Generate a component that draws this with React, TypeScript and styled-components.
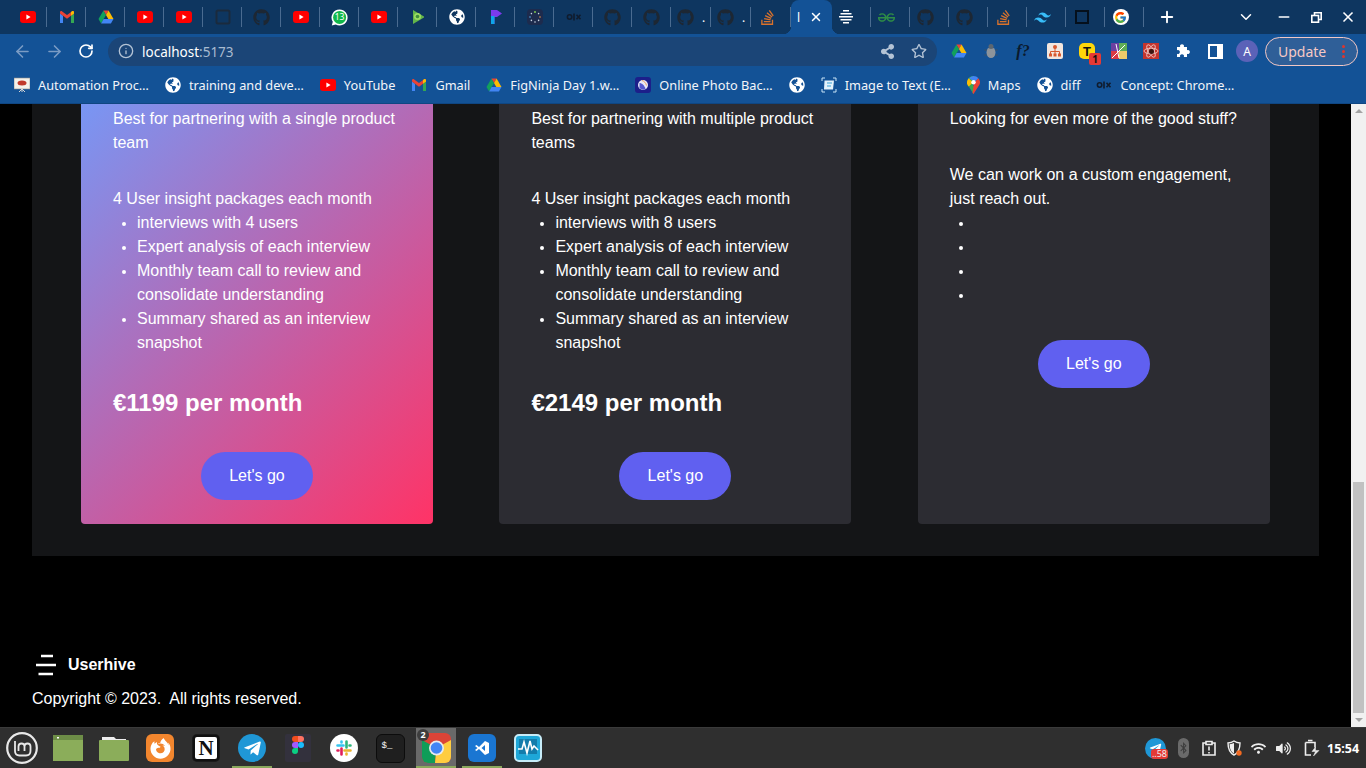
import React from 'react'
import styled, { createGlobalStyle } from 'styled-components'
import {
  FaBluetoothB,
  FaFirefoxBrowser,
  FaGithub,
  FaGlobeAmericas,
  FaRegStar,
  FaShareAlt,
  FaStackOverflow,
  FaTelegramPlane,
  FaVolumeUp,
  FaWifi,
} from 'react-icons/fa'
import { FcGoogle } from 'react-icons/fc'
import { SiGeeksforgeeks, SiTailwindcss } from 'react-icons/si'
import { ArrowLeft, ArrowRight, ChevronDown, Info, Minus, Plus, RotateCw, X } from 'lucide-react'

const GlobalStyle = createGlobalStyle`
  html, body {
    margin: 0;
    padding: 0;
    overflow: hidden;
    background: #000000;
  }
`

const Screen = styled.div`
  display: flex;
  flex-direction: column;
  width: 1366px;
  height: 768px;
  overflow: hidden;
  font-family: 'Noto Sans', sans-serif;
  color: #ffffff;
`

/* browser chrome */
const TabStrip = styled.div`
  display: flex;
  align-items: center;
  flex: none;
  height: 34px;
  padding-left: 8px;
  background: #0e3660;
`
const Tab = styled.div<{ $width?: number; $nudge?: number }>`
  display: flex;
  align-items: center;
  justify-content: center;
  gap: 8px;
  box-sizing: border-box;
  width: ${({ $width }) => $width ?? 39}px;
  height: 20px;
  padding-right: ${({ $nudge }) => $nudge ?? 0}px;
  padding-left: ${({ $nudge }) => ($nudge ? 0 : 1)}px;
  border-right: 1px solid #4a6b90;
  font-size: 12px;
`
const ActiveTab = styled.div`
  position: relative;
  display: flex;
  align-items: center;
  justify-content: flex-end;
  gap: 9px;
  box-sizing: border-box;
  width: 41px;
  height: 34px;
  padding-right: 9px;
  border-radius: 8px 8px 0 0;
  background: #135296;
  font-size: 12px;

  &::before,
  &::after {
    content: '';
    position: absolute;
    bottom: 0;
    width: 8px;
    height: 8px;
  }
  &::before {
    left: -8px;
    background: radial-gradient(circle at 0 0, transparent 8px, #135296 8.5px);
  }
  &::after {
    right: -8px;
    background: radial-gradient(circle at 100% 0, transparent 8px, #135296 8.5px);
  }
`
const NewTab = styled.div`
  display: flex;
  align-items: center;
  justify-content: center;
  width: 46px;
`
const WindowControls = styled.div`
  display: flex;
  align-items: center;
  margin-left: auto;
  padding-right: 2px;
`
const WindowButton = styled.div<{ $gap?: number }>`
  display: flex;
  align-items: center;
  justify-content: center;
  width: 32px;
  margin-right: ${({ $gap }) => $gap ?? 0}px;
`

const Toolbar = styled.div`
  display: flex;
  align-items: center;
  flex: none;
  height: 34px;
  padding-left: 6px;
  background: #135296;
`
const NavButton = styled.div<{ $dim?: boolean }>`
  display: flex;
  align-items: center;
  justify-content: center;
  width: 32px;
  color: ${({ $dim }) => ($dim ? '#7b9cc4' : '#ffffff')};
`
const Omnibox = styled.div`
  display: flex;
  align-items: center;
  gap: 8px;
  box-sizing: border-box;
  width: 829px;
  height: 29px;
  margin: 0 6px;
  padding: 0 10px;
  border-radius: 15px;
  background: #1b4577;
  color: #b4c3d5;
`
const Address = styled.div`
  flex: 1;
  padding-top: 1px;
  font-size: 13.5px;
  color: #a9bbd0;
`
const Host = styled.span`
  color: #ffffff;
`
const OmniboxAction = styled.div`
  display: flex;
  margin-left: 8px;
`
const ExtensionButton = styled.div`
  position: relative;
  display: flex;
  align-items: center;
  justify-content: center;
  width: 32px;
  height: 24px;
`
const ExtensionBadge = styled.span`
  position: absolute;
  right: 2px;
  bottom: -2px;
  width: 12px;
  height: 12px;
  border-radius: 2px;
  background: #e53935;
  color: #111111;
  font-size: 10px;
  font-weight: 700;
  line-height: 12px;
  text-align: center;
`
const Tile = styled.div<{ $bg: string; $color?: string; $size?: number; $radius?: number }>`
  display: flex;
  align-items: center;
  justify-content: center;
  flex: none;
  box-sizing: border-box;
  width: ${({ $size }) => $size ?? 16}px;
  height: ${({ $size }) => $size ?? 16}px;
  border-radius: ${({ $radius }) => $radius ?? 3}px;
  background: ${({ $bg }) => $bg};
  color: ${({ $color }) => $color ?? '#ffffff'};
`
const TileText = styled.span<{ $serif?: boolean; $size: number }>`
  font-family: ${({ $serif }) =>
    $serif ? "'Liberation Serif', serif" : "'Liberation Sans', sans-serif"};
  font-size: ${({ $size }) => $size}px;
  font-weight: 700;
  line-height: 1;
`
const NotionTile = styled(Tile)`
  border: 2px solid #111111;
  box-shadow: 0 0 0 1px #1a1a1a;
`
const TerminalTile = styled(Tile)`
  align-items: flex-start;
  justify-content: flex-start;
  padding: 6px 0 0 5px;
  border: 1px solid #0c0c0c;

  span {
    font-family: 'Liberation Mono', monospace;
    font-size: 9px;
    font-weight: 400;
  }
`
const FormulaMark = styled.span`
  color: #0b1a2d;
  font-family: 'Liberation Serif', serif;
  font-size: 16px;
  font-style: italic;
  font-weight: 700;
`
const SidePanelIcon = styled.div`
  box-sizing: border-box;
  width: 15px;
  height: 15px;
  border: 2px solid #ffffff;
  border-right-width: 6px;
`
const Avatar = styled.div`
  display: flex;
  align-items: center;
  justify-content: center;
  width: 22px;
  height: 22px;
  border-radius: 50%;
  background: #5b62b8;
  font-size: 12px;
`
const UpdatePill = styled.div`
  display: flex;
  align-items: center;
  justify-content: space-between;
  box-sizing: border-box;
  width: 93px;
  height: 29px;
  margin-left: 2px;
  padding: 0 12px;
  border: 1px solid #f2c7c4;
  border-radius: 15px;
  background: #2f5f98;
  color: #f6c9c5;
  font-size: 14px;
`
const MenuDots = styled.div`
  display: flex;
  flex-direction: column;
  gap: 2px;

  i {
    display: block;
    width: 3px;
    height: 3px;
    border-radius: 50%;
    background: #e0352b;
  }
`

const Bookmarks = styled.div`
  display: flex;
  align-items: center;
  gap: 16px;
  flex: none;
  box-sizing: border-box;
  height: 36px;
  padding: 0 0 1px 14px;
  border-bottom: 1px solid #0f4682;
  background: #135296;
`
const Bookmark = styled.div`
  display: flex;
  align-items: center;
  gap: 8px;
  font-size: 12.75px;
  white-space: nowrap;
  color: #f2f5f9;
`

/* page content */
const Viewport = styled.div`
  display: flex;
  flex: 1;
  min-height: 0;
  font-family: 'Liberation Sans', Arial, sans-serif;
`
const Page = styled.main`
  flex: 1;
  box-sizing: border-box;
  padding: 0 32px;
  background: #000000;
`
const PricingPanel = styled.section`
  display: flex;
  gap: 66.4px;
  padding: 0 49px 32px;
  background: #141517;
`
const Card = styled.article<{ $featured?: boolean }>`
  display: flex;
  flex-direction: column;
  box-sizing: border-box;
  width: 352px;
  padding: 3px 32px 24px;
  border-radius: 0 0 4px 4px;
  background: ${({ $featured }) =>
    $featured ? 'linear-gradient(135deg, #7896f4 0%, #ff3366 100%)' : '#2c2c32'};
`
const Copy = styled.p`
  margin: 0 0 32px;
  font-size: 16px;
  line-height: 24px;
`
const Lead = styled.div`
  font-size: 16px;
  line-height: 24px;
`
const Features = styled.ul`
  margin: 0;
  padding-left: 24px;
  font-size: 16px;
  line-height: 24px;

  li::marker {
    font-size: 13px;
  }
`
const Price = styled.div`
  margin: 32px 0 1px;
  font-size: 24px;
  font-weight: 700;
  line-height: 31px;
`
const GoButton = styled.button`
  align-self: center;
  width: 112px;
  height: 48px;
  margin-top: 33px;
  padding: 0 0 1px;
  border: 0;
  border-radius: 24px;
  background: #6060f0;
  color: #ffffff;
  font-family: inherit;
  font-size: 16px;
`
const Footer = styled.footer`
  padding-top: 97px;
`
const Brand = styled.div`
  display: flex;
  align-items: center;
  gap: 12px;
  font-size: 16px;
  font-weight: 700;
  line-height: 24px;
`
const Copyright = styled.div`
  margin-top: 10px;
  font-size: 16px;
  line-height: 24px;
  white-space: pre;
`
const Scrollbar = styled.div`
  display: flex;
  flex-direction: column;
  align-items: center;
  flex: none;
  box-sizing: border-box;
  width: 15px;
  padding: 5px 0;
  background: #f1f1f1;
`
const ScrollThumb = styled.div`
  width: 11px;
  height: 231px;
  margin: auto 0 5px;
  background: #c1c1c1;
`
const ScrollArrow = styled.div<{ $up?: boolean }>`
  width: 0;
  height: 0;
  border-right: 4px solid transparent;
  border-left: 4px solid transparent;
  ${({ $up }) =>
    $up ? 'border-bottom: 4px solid #a3a3a3;' : 'border-top: 4px solid #a3a3a3;'}
`

/* desktop panel */
const Taskbar = styled.div`
  display: flex;
  align-items: stretch;
  flex: none;
  box-sizing: border-box;
  height: 41px;
  padding-left: 2px;
  border-top: 1px solid #3a3a3a;
  background: #2f2f2f;
`
const DockItems = styled.div`
  display: flex;
  gap: 6px;
`
const DockItem = styled.div<{ $open?: boolean; $active?: boolean }>`
  position: relative;
  display: flex;
  align-items: center;
  justify-content: center;
  box-sizing: border-box;
  width: 40px;
  padding-top: ${({ $open }) => ($open ? 2 : 0)}px;
  border-bottom: ${({ $open }) => ($open ? '2px solid #8aa85c' : '0')};
  background: ${({ $active }) => ($active ? '#696969' : 'transparent')};
`
const DockBadge = styled.span`
  position: absolute;
  top: 1px;
  left: 1px;
  width: 12px;
  height: 12px;
  border-radius: 50%;
  background: #3d3d3d;
  font-size: 9px;
  font-weight: 700;
  line-height: 12px;
  text-align: center;
`
const Tray = styled.div`
  display: flex;
  align-items: center;
  margin-left: auto;
  padding-right: 4px;
`
const TrayItem = styled.div<{ $gap?: number }>`
  position: relative;
  display: flex;
  align-items: center;
  justify-content: center;
  width: 25px;
  margin-right: ${({ $gap }) => $gap ?? 0}px;
  color: #eeeeee;
`
const TrayBadge = styled.span`
  position: absolute;
  right: 0;
  bottom: 0;
  height: 10px;
  padding: 0 1px;
  border-radius: 3px;
  background: #e53935;
  font-size: 9px;
  line-height: 10px;
`
const BluetoothPill = styled.div`
  display: flex;
  align-items: center;
  justify-content: center;
  width: 11px;
  height: 20px;
  border-radius: 6px;
  background: #6a6a6a;
  color: #3c3c3c;
`
const Clock = styled.div`
  width: 35px;
  font-size: 12.5px;
  font-weight: 700;
`

const Youtube = () => (
  <svg width="16" height="16" viewBox="0 0 16 16">
    <rect y="2" width="16" height="12" rx="3" fill="#fe0000" />
    <path d="M6.4 5.6 10.6 8l-4.2 2.4z" fill="#ffffff" />
  </svg>
)
const Gmail = () => (
  <svg width="16" height="16" viewBox="0 0 16 16">
    <path d="M1 14V4.5l3 2.2V14z" fill="#4285f4" />
    <path d="M12 14V6.7l3-2.2V14z" fill="#34a853" />
    <path d="M4 6.7 1 4.5V3.4C1 2.3 2.3 1.7 3.2 2.4L8 6l4.8-3.6c.9-.7 2.2-.1 2.2 1v1.1l-3 2.2L8 9.7z" fill="#ea4335" />
    <path d="M12 6.7 15 4.5V3.4c0-1.1-1.3-1.7-2.2-1L12 3z" fill="#fbbc04" />
  </svg>
)
const Drive = () => (
  <svg width="16" height="16" viewBox="0 0 16 16">
    <path d="M5.4 1.5h5.2l-2.6 4.6z" fill="#ea4335" />
    <path d="M5.4 1.5 .5 10l2.6 4.5L8 6.1z" fill="#12a05c" />
    <path d="M10.6 1.5 15.5 10h-5.2L8 6.1z" fill="#fbbc04" />
    <path d="M5.6 10h9.9l-2.6 4.5H3.1z" fill="#4285f4" />
  </svg>
)
const Whatsapp = () => (
  <svg width="17" height="17" viewBox="0 0 17 17">
    <path d="M8.5.5a8 8 0 1 1-3.8 15L.8 16.4l1-3.6A8 8 0 0 1 8.5.5z" fill="#ffffff" />
    <circle cx="8.6" cy="8.4" r="6.5" fill="#11b84a" />
    <text x="8.6" y="11.4" fontSize="8.5" fill="#ffffff" textAnchor="middle" fontFamily="Noto Sans">13</text>
  </svg>
)
const PlayLeaf = () => (
  <svg width="16" height="16" viewBox="0 0 16 16">
    <path d="M3 1l11 6.500v1L3 15z" fill="#63b54a" />
    <circle cx="7.500" cy="7.500" r="3.500" fill="#9bdc62" />
    <circle cx="7.500" cy="7.500" r="1.800" fill="#3f8f3a" />
  </svg>
)
const Pinwheel = () => (
  <svg width="16" height="16" viewBox="0 0 16 16">
    <path d="M3 1h6l5 3.500L9 8H6.500v7H3z" fill="#7c3aed" />
    <path d="M3 7h3.500v8H3z" fill="#0ea5e9" />
  </svg>
)
const DotRing = () => (
  <svg width="16" height="16" viewBox="0 0 16 16">
    <rect width="16" height="16" rx="4" fill="#1d2b4d" />
    <g fill="#c7d2e2">
      <circle cx="8" cy="3" r="1" fill="#7ac74f" />
      <circle cx="11.6" cy="4.6" r=".8" />
      <circle cx="13" cy="8" r=".8" fill="#e3924b" />
      <circle cx="11.6" cy="11.4" r=".8" />
      <circle cx="8" cy="13" r=".8" />
      <circle cx="4.4" cy="11.4" r=".8" />
      <circle cx="3" cy="8" r=".8" fill="#5aa8e6" />
      <circle cx="4.4" cy="4.6" r=".8" />
    </g>
  </svg>
)
const AlxMark = () => (
  <svg width="16" height="16" viewBox="0 0 16 16" fill="none" stroke="#101c2e" strokeWidth="1.6">
    <circle cx="3.6" cy="8" r="2.2" />
    <path d="M8 4.5v7M10.5 5.8l4 4.4M14.5 5.8l-4 4.4" />
  </svg>
)
const StripedOrb = () => (
  <svg width="14" height="16" viewBox="0 0 14 16" fill="#ffffff">
    <rect x="4" y="1" width="6" height="1.500" />
    <rect x="1.500" y="4" width="11" height="1.500" />
    <rect y="7" width="14" height="1.500" />
    <rect x="1.500" y="10" width="11" height="1.500" />
    <rect x="4" y="13" width="6" height="1.500" />
  </svg>
)
const SquareOutline = () => (
  <svg width="16" height="16" viewBox="0 0 16 16" fill="none">
    <rect x="2" y="2" width="12" height="12" stroke="#05101c" strokeWidth="2" />
  </svg>
)
const DarkSquare = () => (
  <svg width="16" height="16" viewBox="0 0 16 16" fill="none">
    <rect x="1.5" y="1.5" width="13" height="13" rx="1.5" stroke="#1a2a3d" strokeWidth="2" />
  </svg>
)
const RestoreGlyph = () => (
  <svg width="11" height="11" viewBox="0 0 11 11" fill="none" stroke="#ffffff" strokeWidth="1.600">
    <path d="M3.500 3V.8h6.700v6.700H8" />
    <rect x=".8" y="3.500" width="6.700" height="6.700" />
  </svg>
)
const PuzzleGlyph = () => (
  <svg width="16" height="16" viewBox="0 0 16 16" fill="#ffffff">
    <path d="M2 4h3.200a2 2 0 1 1 3.600 0H12v3.200a2 2 0 1 1 0 3.600V14H8.800a2 2 0 1 0-3.600 0H2v-3.200a2 2 0 1 0 0-3.600z" />
  </svg>
)
const Slides = () => (
  <svg width="16" height="16" viewBox="0 0 16 16">
    <rect y="1" width="16" height="11" fill="#f4f1ea" stroke="#8a8a8a" strokeWidth=".6" />
    <ellipse cx="8" cy="6" rx="4.5" ry="2.5" fill="#c0392b" />
    <path d="M8 12v3M5 15l3-3 3 3" stroke="#d6d6d6" fill="none" />
  </svg>
)
const PhotoMoon = () => (
  <svg width="16" height="16" viewBox="0 0 16 16">
    <rect width="16" height="16" rx="3" fill="#1c1f8a" />
    <circle cx="8" cy="8" r="5" fill="#e8e8f8" />
    <path d="M4.5 6c2 0 5 2 6 6-2 1.400-5 .6-6-1.500z" fill="#5558d0" />
    <path d="M7 3.500c2 .5 4 2.500 4.500 5" stroke="#f0a35a" fill="none" />
  </svg>
)
const ImageScan = () => (
  <svg width="16" height="16" viewBox="0 0 16 16" fill="none">
    <path d="M1 4V1h3M12 1h3v3M15 12v3h-3M4 15H1v-3" stroke="#c9e4f7" />
    <path d="M3.500 3.500h9.500l-1 9H3z" fill="#e4f2fb" />
    <path d="M6 6h5M6 9h4" stroke="#38a3d8" />
  </svg>
)
const MapsPin = () => (
  <svg width="13" height="18" viewBox="0 0 13 18">
    <path d="M6.500 0A6.300 6.300 0 0 0 1.700 10.400L6.500 18l2-5-3-5z" fill="#34a853" />
    <path d="M1.700 2.300 6 6.500l-4.300 4A6.300 6.300 0 0 1 1.700 2.300z" fill="#fbbc04" />
    <path d="M6.500 0c1.900 0 3.600.8 4.800 2.200L8 6 2 2.300A6.300 6.300 0 0 1 6.500 0z" fill="#4285f4" />
    <path d="M11.300 2.200a6.300 6.300 0 0 1 0 8.200L6.500 18l-1-1 1.500-10z" fill="#ea4335" />
    <circle cx="6.500" cy="6.300" r="2.200" fill="#ffffff" />
  </svg>
)
const BugIcon = () => (
  <svg width="16" height="16" viewBox="0 0 16 16">
    <ellipse cx="8" cy="9.500" rx="4.500" ry="5.500" fill="#8d949b" />
    <circle cx="8" cy="3.500" r="2.500" fill="#5c6670" />
    <path d="M1.500 7h2M1.500 12h2M12.500 7h2M12.500 12h2" stroke="#46505a" />
  </svg>
)
const OrgChart = () => (
  <svg width="16" height="16" viewBox="0 0 16 16">
    <rect width="16" height="16" rx="2" fill="#f3e6de" />
    <path d="M8 3.500v5M3.500 11V8.500h9V11M8 8.500V11" stroke="#d9592f" fill="none" />
    <circle cx="8" cy="4" r="2" fill="#d9592f" />
    <rect x="2" y="10.500" width="3" height="3" fill="#d9592f" />
    <rect x="6.500" y="10.500" width="3" height="3" fill="#d9592f" />
    <rect x="11" y="10.500" width="3" height="3" fill="#d9592f" />
  </svg>
)
const Collage = () => (
  <svg width="16" height="16" viewBox="0 0 16 16">
    <rect width="8" height="8" fill="#6d3fa0" />
    <rect x="8" width="8" height="8" fill="#5fae57" />
    <rect y="8" width="8" height="8" fill="#d93a45" />
    <rect x="8" y="8" width="8" height="8" fill="#eccb6a" />
    <path d="M1 15 14 2M5 1l3 14" stroke="#ffffff" />
  </svg>
)
const AtomTile = () => (
  <svg width="16" height="16" viewBox="0 0 16 16" fill="none">
    <rect width="16" height="16" fill="#c4342d" />
    <g stroke="#f3cfca" strokeWidth=".8">
      <ellipse cx="8" cy="8" rx="7" ry="2.800" />
      <ellipse cx="8" cy="8" rx="7" ry="2.800" transform="rotate(60 8 8)" />
      <ellipse cx="8" cy="8" rx="7" ry="2.800" transform="rotate(120 8 8)" />
    </g>
    <circle cx="8.500" cy="8.500" r="2.500" fill="#3a1512" />
  </svg>
)
const ClipboardAlert = () => (
  <svg width="14" height="16" viewBox="0 0 14 16" fill="none" stroke="#eeeeee" strokeWidth="1.600">
    <path d="M4 3H1v12h12V3h-3M4 1.500h6v3H4zM7 6.500v4M7 12v1.400" />
  </svg>
)
const ShieldDot = () => (
  <svg width="16" height="16" viewBox="0 0 16 16">
    <path d="M8 1c2 1.300 4 1.800 6 2 0 5-1 9.500-6 12C3 12.500 2 8 2 3c2-.2 4-.7 6-2z" fill="none" stroke="#eeeeee" strokeWidth="1.400" />
    <path d="M8 3v10.500C4.500 11.500 3.700 8 3.600 4.200 5.300 4 6.700 3.700 8 3z" fill="#eeeeee" />
    <circle cx="13" cy="13" r="2.700" fill="#f26a21" />
  </svg>
)
const BatteryCharging = () => (
  <svg width="16" height="18" viewBox="0 0 16 18" fill="none" stroke="#eeeeee" strokeWidth="1.600">
    <path d="M4 1.500h4.500M1.500 3.500h9.500v5M7 16H1.500V3.500" />
    <path d="M11.500 8 8 12.500h3.500L9.500 17l5.500-5.500h-3.500z" fill="#eeeeee" strokeWidth=".5" />
  </svg>
)
const MintLogo = () => (
  <svg width="32" height="32" viewBox="0 0 32 32" fill="none" stroke="#e8e8e8">
    <circle cx="16" cy="16" r="14.800" strokeWidth="2.200" />
    <path d="M9 9v10c0 3 1.500 4.500 4.500 4.500H20c3 0 4.500-1.500 4.500-4.500v-4.500a3 3 0 0 0-6 0V19M18.500 14.500a3 3 0 0 0-6 0V19" strokeWidth="1.800" />
  </svg>
)
const FolderFlat = () => (
  <svg width="30" height="26" viewBox="0 0 30 26">
    <rect width="30" height="26" fill="#8bad5a" />
    <rect width="30" height="5" fill="#6d8d47" />
    <rect x="4" y="2" width="2" height="1.500" fill="#ffffff" />
  </svg>
)
const FolderOpen = () => (
  <svg width="30" height="26" viewBox="0 0 30 26">
    <path d="M3 2h12l2 2h10v2H3z" fill="#eeeeee" />
    <rect y="5" width="30" height="21" rx="1" fill="#8bad5a" />
  </svg>
)
const FigmaMark = () => (
  <svg width="26" height="28" viewBox="0 0 26 28">
    <rect width="26" height="28" rx="2" fill="#33313d" />
    <path d="M7 5a3 3 0 0 1 3-3h3v6h-3a3 3 0 0 1-3-3z" fill="#f24e1e" />
    <path d="M13 2h3a3 3 0 0 1 0 6h-3z" fill="#ff7262" />
    <path d="M7 11a3 3 0 0 1 3-3h3v6h-3a3 3 0 0 1-3-3z" fill="#a259ff" />
    <circle cx="16" cy="11" r="3" fill="#1abcfe" />
    <path d="M7 17a3 3 0 0 1 3-3h3v3a3 3 0 0 1-6 0z" fill="#0acf83" />
  </svg>
)
const SlackMark = () => (
  <svg width="28" height="28" viewBox="0 0 28 28">
    <circle cx="14" cy="14" r="14" fill="#ffffff" />
    <g strokeWidth="2.600" strokeLinecap="round" fill="none">
      <path d="M11.500 7.500v1M7.500 11.500h6" stroke="#36c5f0" />
      <path d="M20.500 11.500h-1M16.500 7.500v6" stroke="#2eb67d" />
      <path d="M16.500 20.500v-1M20.500 16.500h-6" stroke="#ecb22e" />
      <path d="M7.500 16.500h1M11.500 20.500v-6" stroke="#e01e5a" />
    </g>
  </svg>
)
const ChromeMark = () => (
  <svg width="29" height="30" viewBox="0 0 29 30">
    <clipPath id="chrome-tile">
      <rect width="29" height="30" rx="6" />
    </clipPath>
    <g clipPath="url(#chrome-tile)">
      <rect width="29" height="30" fill="#db4437" />
      <path d="M14.500 15 0 7v23h13z" fill="#0f9d58" />
      <path d="M14.500 15 29 7v23H13z" fill="#ffcd40" />
    </g>
    <circle cx="14.500" cy="15" r="7.500" fill="#e8eaed" />
    <circle cx="14.500" cy="15" r="5.800" fill="#4285f4" />
  </svg>
)
const VsCodeMark = () => (
  <svg width="16" height="16" viewBox="0 0 16 16" fill="#ffffff">
    <path d="M11 1l4 2v10l-4 2-6-6-2.500 2L1 10l2.500-2L1 6l1.500-1L5 7zM11 5 7.500 8l3.500 3z" fillRule="evenodd" />
  </svg>
)
const MonitorWave = () => (
  <svg width="28" height="28" viewBox="0 0 28 28" fill="none">
    <rect x="1" y="1" width="26" height="26" rx="4" fill="#1ea7d8" stroke="#c7ecf8" strokeWidth="2" />
    <rect x="5" y="5" width="18" height="15" fill="#137cab" />
    <path d="M4 15h4l2-7 3 11 3-12 2 8 2-3 4 4" stroke="#ffffff" strokeWidth="1.600" />
  </svg>
)

const iconMap: Record<string, React.ReactNode> = {
  yt: <Youtube />,
  gmail: <Gmail />,
  drive: <Drive />,
  dark: <DarkSquare />,
  gh: <FaGithub size={17} color="#1d2733" />,
  wa: <Whatsapp />,
  leaf: <PlayLeaf />,
  globe: <FaGlobeAmericas size={16} color="#ffffff" />,
  pin: <Pinwheel />,
  ring: <DotRing />,
  alx: <AlxMark />,
  so: <FaStackOverflow size={17} color="#d9722c" />,
  orb: <StripedOrb />,
  gfg: <SiGeeksforgeeks size={17} color="#2f8d46" />,
  tw: <SiTailwindcss size={17} color="#38bdf8" />,
  square: <SquareOutline />,
  google: (
    <Tile $bg="#ffffff" $radius={8}>
      <FcGoogle size={13} />
    </Tile>
  ),
}

const tabs: { icon: string; width?: number; dot?: boolean }[] = [
  { icon: 'yt' },
  { icon: 'gmail' },
  { icon: 'drive' },
  { icon: 'yt' },
  { icon: 'yt' },
  { icon: 'dark' },
  { icon: 'gh' },
  { icon: 'yt' },
  { icon: 'wa' },
  { icon: 'yt' },
  { icon: 'leaf' },
  { icon: 'globe' },
  { icon: 'pin' },
  { icon: 'ring' },
  { icon: 'alx' },
  { icon: 'gh' },
  { icon: 'gh' },
  { icon: 'gh', width: 40, dot: true },
  { icon: 'gh', width: 40, dot: true },
]
const tabsAfter = [
  { icon: 'orb', nudge: 10 },
  { icon: 'gfg', nudge: 7 },
  { icon: 'gh', nudge: 7 },
  { icon: 'gh', nudge: 7 },
  { icon: 'so', nudge: 7 },
  { icon: 'tw', nudge: 7 },
  { icon: 'square', nudge: 7 },
  { icon: 'google', nudge: 7 },
]

const bookmarks: { icon: React.ReactNode; label?: string }[] = [
  { icon: <Slides />, label: 'Automation Proc…' },
  { icon: iconMap.globe, label: 'training and deve…' },
  { icon: <Youtube />, label: 'YouTube' },
  { icon: <Gmail />, label: 'Gmail' },
  { icon: <Drive />, label: 'FigNinja Day 1.w…' },
  { icon: <PhotoMoon />, label: 'Online Photo Bac…' },
  { icon: iconMap.globe },
  { icon: <ImageScan />, label: 'Image to Text (E…' },
  { icon: <MapsPin />, label: 'Maps' },
  { icon: iconMap.globe, label: 'diff' },
  { icon: <AlxMark />, label: 'Concept: Chrome…' },
]

const plans = [
  {
    featured: true,
    copy: 'Best for partnering with a single product team',
    lead: '4 User insight packages each month',
    items: [
      'interviews with 4 users',
      'Expert analysis of each interview',
      'Monthly team call to review and consolidate understanding',
      'Summary shared as an interview snapshot',
    ],
    price: '€1199 per month',
  },
  {
    copy: 'Best for partnering with multiple product teams',
    lead: '4 User insight packages each month',
    items: [
      'interviews with 8 users',
      'Expert analysis of each interview',
      'Monthly team call to review and consolidate understanding',
      'Summary shared as an interview snapshot',
    ],
    price: '€2149 per month',
  },
  {
    copy: 'Looking for even more of the good stuff?',
    lead: 'We can work on a custom engagement, just reach out.',
    items: ['', '', '', ''],
  },
]

const App: React.FunctionComponent = () => (
  <Screen>
    <GlobalStyle />
    <TabStrip>
      {tabs.map((tab, i) => (
        <Tab key={i} $width={tab.width}>
          {iconMap[tab.icon]}
          {tab.dot && <span>.</span>}
        </Tab>
      ))}
      <Tab $width={40} $nudge={7}>
        {iconMap.so}
      </Tab>
      <ActiveTab>
        <span>l</span>
        <X size={14} strokeWidth={2.5} />
      </ActiveTab>
      {tabsAfter.map((tab, i) => (
        <Tab key={i} $nudge={tab.nudge}>
          {iconMap[tab.icon]}
        </Tab>
      ))}
      <NewTab>
        <Plus size={18} strokeWidth={2.5} />
      </NewTab>
      <WindowControls>
        <WindowButton $gap={6}>
          <ChevronDown size={18} strokeWidth={2} />
        </WindowButton>
        <WindowButton>
          <Minus size={16} strokeWidth={2.5} />
        </WindowButton>
        <WindowButton>
          <RestoreGlyph />
        </WindowButton>
        <WindowButton>
          <X size={16} strokeWidth={2.5} />
        </WindowButton>
      </WindowControls>
    </TabStrip>

    <Toolbar>
      <NavButton $dim>
        <ArrowLeft size={19} strokeWidth={2} />
      </NavButton>
      <NavButton $dim>
        <ArrowRight size={19} strokeWidth={2} />
      </NavButton>
      <NavButton>
        <RotateCw size={16} strokeWidth={2.5} />
      </NavButton>
      <Omnibox>
        <Info size={16} />
        <Address>
          <Host>localhost</Host>:5173
        </Address>
        <FaShareAlt size={15} />
        <OmniboxAction>
          <FaRegStar size={16} />
        </OmniboxAction>
      </Omnibox>
      <ExtensionButton>
        <Drive />
      </ExtensionButton>
      <ExtensionButton>
        <BugIcon />
      </ExtensionButton>
      <ExtensionButton>
        <FormulaMark>f?</FormulaMark>
      </ExtensionButton>
      <ExtensionButton>
        <OrgChart />
      </ExtensionButton>
      <ExtensionButton>
        <Tile $bg="#ffd60a" $color="#111111" $radius={5}>
          <TileText $size={13}>T</TileText>
        </Tile>
        <ExtensionBadge>1</ExtensionBadge>
      </ExtensionButton>
      <ExtensionButton>
        <Collage />
      </ExtensionButton>
      <ExtensionButton>
        <AtomTile />
      </ExtensionButton>
      <ExtensionButton>
        <PuzzleGlyph />
      </ExtensionButton>
      <ExtensionButton>
        <SidePanelIcon />
      </ExtensionButton>
      <ExtensionButton>
        <Avatar>A</Avatar>
      </ExtensionButton>
      <UpdatePill>
        Update
        <MenuDots>
          <i />
          <i />
          <i />
        </MenuDots>
      </UpdatePill>
    </Toolbar>

    <Bookmarks>
      {bookmarks.map((bookmark, i) => (
        <Bookmark key={i}>
          {bookmark.icon}
          {bookmark.label && <span>{bookmark.label}</span>}
        </Bookmark>
      ))}
    </Bookmarks>

    <Viewport>
      <Page>
        <PricingPanel>
          {plans.map((plan, i) => (
            <Card key={i} $featured={plan.featured}>
              <Copy>{plan.copy}</Copy>
              <Lead>{plan.lead}</Lead>
              <Features>
                {plan.items.map((item, j) => (
                  <li key={j}>{item || '\u00a0'}</li>
                ))}
              </Features>
              {plan.price && <Price>{plan.price}</Price>}
              <GoButton type="button">Let's go</GoButton>
            </Card>
          ))}
        </PricingPanel>
        <Footer>
          <Brand>
            <svg width="24" height="22" viewBox="0 0 24 22" stroke="#ffffff" strokeWidth="2.400">
              <path d="M9 2h12M4 11h20M6.500 20H21" />
            </svg>
            Userhive
          </Brand>
          <Copyright>Copyright © 2023.  All rights reserved.</Copyright>
        </Footer>
      </Page>
      <Scrollbar>
        <ScrollArrow $up />
        <ScrollThumb />
        <ScrollArrow />
      </Scrollbar>
    </Viewport>

    <Taskbar>
      <DockItems>
        <DockItem>
          <MintLogo />
        </DockItem>
        <DockItem>
          <FolderFlat />
        </DockItem>
        <DockItem>
          <FolderOpen />
        </DockItem>
        <DockItem>
          <Tile $bg="#f2862e" $size={28} $radius={6}>
            <FaFirefoxBrowser size={21} />
          </Tile>
        </DockItem>
        <DockItem>
          <NotionTile $bg="#ffffff" $color="#111111" $size={26} $radius={4}>
            <TileText $serif $size={21}>N</TileText>
          </NotionTile>
        </DockItem>
        <DockItem $open>
          <Tile $bg="#1f97d6" $size={28} $radius={14}>
            <FaTelegramPlane size={19} />
          </Tile>
        </DockItem>
        <DockItem>
          <FigmaMark />
        </DockItem>
        <DockItem>
          <SlackMark />
        </DockItem>
        <DockItem>
          <TerminalTile $bg="#1f1f1f" $size={29} $radius={6}>
            <span>$_</span>
          </TerminalTile>
        </DockItem>
        <DockItem $open $active>
          <ChromeMark />
          <DockBadge>2</DockBadge>
        </DockItem>
        <DockItem $open>
          <Tile $bg="#1a76d2" $size={28} $radius={6}>
            <VsCodeMark />
          </Tile>
        </DockItem>
        <DockItem>
          <MonitorWave />
        </DockItem>
      </DockItems>
      <Tray>
        <TrayItem $gap={3}>
          <Tile $bg="#1f97d6" $size={21} $radius={11}>
            <FaTelegramPlane size={13} />
          </Tile>
          <TrayBadge>..58</TrayBadge>
        </TrayItem>
        <TrayItem>
          <BluetoothPill>
            <FaBluetoothB size={12} />
          </BluetoothPill>
        </TrayItem>
        <TrayItem>
          <ClipboardAlert />
        </TrayItem>
        <TrayItem>
          <ShieldDot />
        </TrayItem>
        <TrayItem>
          <FaWifi size={15} />
        </TrayItem>
        <TrayItem $gap={3}>
          <FaVolumeUp size={15} />
        </TrayItem>
        <TrayItem $gap={3}>
          <BatteryCharging />
        </TrayItem>
        <Clock>15:54</Clock>
      </Tray>
    </Taskbar>
  </Screen>
)

export default App
